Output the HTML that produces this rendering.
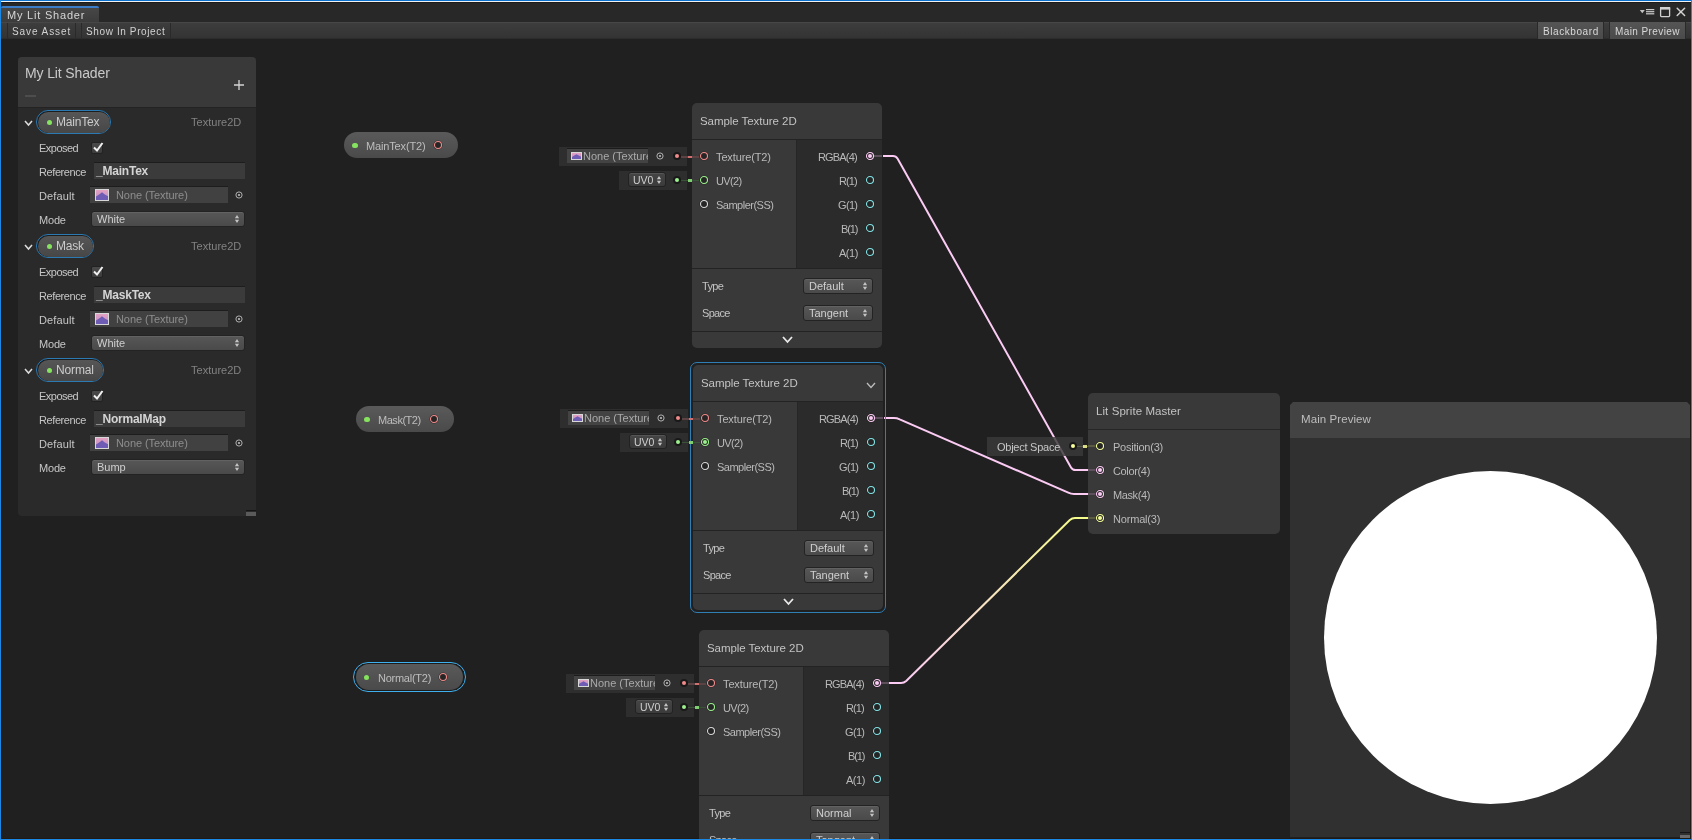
<!DOCTYPE html>
<html><head><meta charset="utf-8"><style>
html,body{margin:0;padding:0;width:1692px;height:840px;overflow:hidden;background:#202020;}
body{position:relative;font-family:"Liberation Sans", sans-serif;}
.t{position:absolute;line-height:0;white-space:pre;will-change:transform;}
.r{position:absolute;box-sizing:border-box;}
svg{position:absolute;left:0;top:0;}
</style></head><body>
<div class="r" style="left:1px;top:838px;width:1690px;height:1px;background:#1e1a16"></div>
<div class="r" style="left:1px;top:2px;width:1px;height:837px;background:#1e1a16"></div>
<div class="r" style="left:1690px;top:22px;width:1px;height:817px;background:#1e1a16"></div>
<div class="r" style="left:0px;top:2px;width:1692px;height:20px;background:#282828;border-top:1px solid #1b1b1b"></div>
<div class="r" style="left:1px;top:6px;width:98px;height:16px;background:linear-gradient(#474747,#3c3c3c);border-top:2px solid #3b7cc9;border-radius:2px 2px 0 0"></div>
<div class="t" style="top:15.00px;font-size:11px;color:#d6d6d6;letter-spacing:0.794px;left:6.50px;">My Lit Shader</div>
<div class="r" style="left:1px;top:22px;width:1690px;height:17px;background:linear-gradient(#3d3d3d,#333333);border-top:1px solid #474747;border-bottom:1px solid #2c2c2c"></div>
<div class="r" style="left:7px;top:23px;width:1px;height:15px;background:#2a2a2a"></div>
<div class="r" style="left:75px;top:23px;width:1px;height:15px;background:#2a2a2a"></div>
<div class="r" style="left:81px;top:23px;width:1px;height:15px;background:#2a2a2a"></div>
<div class="r" style="left:170px;top:23px;width:1px;height:15px;background:#2a2a2a"></div>
<div class="t" style="top:31.80px;font-size:10px;color:#d2d2d2;letter-spacing:0.908px;left:12.40px;">Save Asset</div>
<div class="t" style="top:31.70px;font-size:10px;color:#d2d2d2;letter-spacing:0.618px;left:85.60px;">Show In Project</div>
<div class="r" style="left:1537px;top:22px;width:67px;height:17px;background:linear-gradient(#555,#4a4a4a);border-left:1px solid #2a2a2a;border-right:1px solid #2a2a2a"></div>
<div class="r" style="left:1609px;top:22px;width:77px;height:17px;background:linear-gradient(#555,#4a4a4a);border-left:1px solid #2a2a2a;border-right:1px solid #2a2a2a"></div>
<div class="t" style="top:31.50px;font-size:10px;color:#d8d8d8;letter-spacing:0.574px;left:1542.60px;">Blackboard</div>
<div class="t" style="top:31.50px;font-size:10px;color:#d8d8d8;letter-spacing:0.406px;left:1614.50px;">Main Preview</div>
<svg style="left:1638px;top:0px" width="54" height="22"><path d="M1.8 10 L6.8 10 L4.3 13.2 Z" fill="#c4c4c4"/><rect x="8" y="9" width="8.3" height="1.2" fill="#cdcdcd"/><rect x="8" y="11.1" width="8.3" height="1.2" fill="#cdcdcd"/><rect x="8" y="13.2" width="8.3" height="1.2" fill="#cdcdcd"/><rect x="22.6" y="7.6" width="9" height="9" rx="0.8" fill="none" stroke="#d0d0d0" stroke-width="1.3"/><rect x="22" y="7" width="10.2" height="2.6" fill="#d0d0d0"/><path d="M39.2 8.3 L46.6 15.5 M46.6 8.3 L39.2 15.5" stroke="#d2d2d2" stroke-width="1.5" stroke-linecap="round"/></svg>
<div class="r" style="left:18px;top:57px;width:238px;height:459px;background:#2a2a2a;border-radius:4px;overflow:hidden"></div>
<div class="r" style="left:18px;top:57px;width:238px;height:51px;background:#393939;border-radius:4px 4px 0 0;border-bottom:1px solid #232323"></div>
<div class="t" style="top:73.00px;font-size:14px;color:#c9c9c9;letter-spacing:-0.131px;left:25.20px;">My Lit Shader</div>
<svg style="left:233px;top:79px" width="12" height="12"><path d="M6 1 V11 M1 6 H11" stroke="#d4d4d4" stroke-width="1.3"/></svg>
<div class="r" style="left:25px;top:95px;width:11px;height:2px;background:#4d4d4d"></div>
<div class="r" style="left:246px;top:510px;width:10px;height:1px;background:#151515"></div>
<div class="r" style="left:246px;top:512px;width:10px;height:4px;background:#5a5a5a"></div>
<svg style="left:22.5px;top:118.5px" width="11" height="8"><path d="M2 2 L5.5 6 L9 2" fill="none" stroke="#dcdcdc" stroke-width="1.5"/></svg>
<div class="r" style="left:36px;top:110px;width:75px;height:24px;border-radius:12px;border:1px solid #2b7ab4;background:#1d1d1d"></div>
<div class="r" style="left:37.5px;top:111.5px;width:72px;height:21px;border-radius:11px;background:linear-gradient(#565656,#474747)"></div>
<div class="r" style="left:46.5px;top:119.5px;width:5px;height:5px;border-radius:50%;background:#86e35f"></div>
<div class="t" style="top:122.00px;font-size:12px;color:#cbcbcb;letter-spacing:-0.181px;left:56.40px;">MainTex</div>
<div class="t" style="top:122.00px;font-size:11px;color:#828282;letter-spacing:0.020px;right:1450.38px;">Texture2D</div>
<div class="t" style="top:148.00px;font-size:11px;color:#c6c6c6;letter-spacing:-0.519px;left:38.60px;">Exposed</div>
<div class="r" style="left:91px;top:142px;width:12px;height:12px;border-radius:2px;background:linear-gradient(#4a4a4a,#3c3c3c);border:1px solid #222"></div>
<svg style="left:91px;top:140px" width="14" height="14"><path d="M3 7.5 L6 10.5 L11.5 3" fill="none" stroke="#f0f0f0" stroke-width="2"/></svg>
<div class="t" style="top:172.00px;font-size:11px;color:#c6c6c6;letter-spacing:-0.408px;left:38.60px;">Reference</div>
<div class="r" style="left:94px;top:162px;width:151px;height:17px;background:#3b3b3b;border-top:1px solid #1d1d1d"></div>
<div class="t" style="top:171.30px;font-size:12px;color:#d4d4d4;font-weight:bold;letter-spacing:-0.214px;left:96.20px;">_MainTex</div>
<div class="t" style="top:196.00px;font-size:11px;color:#c6c6c6;letter-spacing:0.107px;left:38.60px;">Default</div>
<div class="r" style="left:90px;top:186px;width:138px;height:17px;background:#414141;border-top:1px solid #1d1d1d"></div>
<svg style="left:95px;top:189px" width="14" height="12"><defs><linearGradient id="ti95_189" x1="0" y1="0" x2="0" y2="1"><stop offset="0" stop-color="#e7a2c2"/><stop offset="1" stop-color="#b58dc8"/></linearGradient></defs><rect x="0.5" y="0.5" width="13" height="11" fill="url(#ti95_189)" stroke="#d8d8d8" stroke-width="1"/><path d="M1 11 L1 7.4399999999999995 L4.2 5.4 L7.0 3.3600000000000003 L9.799999999999999 5.4 L13 7.199999999999999 L13 11 Z" fill="#6f5cb4"/></svg>
<div class="t" style="top:195.00px;font-size:11px;color:#8e8e8e;letter-spacing:-0.074px;left:116.40px;">None (Texture)</div>
<svg style="left:234px;top:190px" width="10" height="10"><circle cx="5" cy="5" r="3.1" fill="none" stroke="#bdbdbd" stroke-width="0.9"/><circle cx="5" cy="5" r="1.1" fill="#bdbdbd"/></svg>
<div class="t" style="top:220.00px;font-size:11px;color:#c6c6c6;letter-spacing:-0.177px;left:38.60px;">Mode</div>
<div class="r" style="left:91px;top:211px;width:154px;height:16px;border-radius:3px;background:linear-gradient(#575757,#4a4a4a);border:1px solid #232323;box-shadow:inset 0 1px 0 #626262"></div>
<div class="t" style="top:218.50px;font-size:11px;color:#cfcfcf;left:97.00px;">White</div>
<svg style="left:234px;top:214.0px" width="6" height="10"><path d="M0.9 4.2 L3 1 L5.1 4.2 Z M0.9 5.8 L3 9 L5.1 5.8 Z" fill="#c4c4c4"/></svg>
<svg style="left:22.5px;top:242.5px" width="11" height="8"><path d="M2 2 L5.5 6 L9 2" fill="none" stroke="#dcdcdc" stroke-width="1.5"/></svg>
<div class="r" style="left:36px;top:234px;width:58px;height:24px;border-radius:12px;border:1px solid #2b7ab4;background:#1d1d1d"></div>
<div class="r" style="left:37.5px;top:235.5px;width:55px;height:21px;border-radius:11px;background:linear-gradient(#565656,#474747)"></div>
<div class="r" style="left:46.5px;top:243.5px;width:5px;height:5px;border-radius:50%;background:#86e35f"></div>
<div class="t" style="top:246.00px;font-size:12px;color:#cbcbcb;letter-spacing:-0.224px;left:56.40px;">Mask</div>
<div class="t" style="top:246.00px;font-size:11px;color:#828282;letter-spacing:0.020px;right:1450.38px;">Texture2D</div>
<div class="t" style="top:272.00px;font-size:11px;color:#c6c6c6;letter-spacing:-0.519px;left:38.60px;">Exposed</div>
<div class="r" style="left:91px;top:266px;width:12px;height:12px;border-radius:2px;background:linear-gradient(#4a4a4a,#3c3c3c);border:1px solid #222"></div>
<svg style="left:91px;top:264px" width="14" height="14"><path d="M3 7.5 L6 10.5 L11.5 3" fill="none" stroke="#f0f0f0" stroke-width="2"/></svg>
<div class="t" style="top:296.00px;font-size:11px;color:#c6c6c6;letter-spacing:-0.408px;left:38.60px;">Reference</div>
<div class="r" style="left:94px;top:286px;width:151px;height:17px;background:#3b3b3b;border-top:1px solid #1d1d1d"></div>
<div class="t" style="top:295.30px;font-size:12px;color:#d4d4d4;font-weight:bold;letter-spacing:-0.212px;left:96.20px;">_MaskTex</div>
<div class="t" style="top:320.00px;font-size:11px;color:#c6c6c6;letter-spacing:0.107px;left:38.60px;">Default</div>
<div class="r" style="left:90px;top:310px;width:138px;height:17px;background:#414141;border-top:1px solid #1d1d1d"></div>
<svg style="left:95px;top:313px" width="14" height="12"><defs><linearGradient id="ti95_313" x1="0" y1="0" x2="0" y2="1"><stop offset="0" stop-color="#e7a2c2"/><stop offset="1" stop-color="#b58dc8"/></linearGradient></defs><rect x="0.5" y="0.5" width="13" height="11" fill="url(#ti95_313)" stroke="#d8d8d8" stroke-width="1"/><path d="M1 11 L1 7.4399999999999995 L4.2 5.4 L7.0 3.3600000000000003 L9.799999999999999 5.4 L13 7.199999999999999 L13 11 Z" fill="#6f5cb4"/></svg>
<div class="t" style="top:319.00px;font-size:11px;color:#8e8e8e;letter-spacing:-0.074px;left:116.40px;">None (Texture)</div>
<svg style="left:234px;top:314px" width="10" height="10"><circle cx="5" cy="5" r="3.1" fill="none" stroke="#bdbdbd" stroke-width="0.9"/><circle cx="5" cy="5" r="1.1" fill="#bdbdbd"/></svg>
<div class="t" style="top:344.00px;font-size:11px;color:#c6c6c6;letter-spacing:-0.177px;left:38.60px;">Mode</div>
<div class="r" style="left:91px;top:335px;width:154px;height:16px;border-radius:3px;background:linear-gradient(#575757,#4a4a4a);border:1px solid #232323;box-shadow:inset 0 1px 0 #626262"></div>
<div class="t" style="top:342.50px;font-size:11px;color:#cfcfcf;left:97.00px;">White</div>
<svg style="left:234px;top:338.0px" width="6" height="10"><path d="M0.9 4.2 L3 1 L5.1 4.2 Z M0.9 5.8 L3 9 L5.1 5.8 Z" fill="#c4c4c4"/></svg>
<svg style="left:22.5px;top:366.5px" width="11" height="8"><path d="M2 2 L5.5 6 L9 2" fill="none" stroke="#dcdcdc" stroke-width="1.5"/></svg>
<div class="r" style="left:36px;top:358px;width:68px;height:24px;border-radius:12px;border:1px solid #2b7ab4;background:#1d1d1d"></div>
<div class="r" style="left:37.5px;top:359.5px;width:65px;height:21px;border-radius:11px;background:linear-gradient(#565656,#474747)"></div>
<div class="r" style="left:46.5px;top:367.5px;width:5px;height:5px;border-radius:50%;background:#86e35f"></div>
<div class="t" style="top:370.00px;font-size:12px;color:#cbcbcb;letter-spacing:-0.134px;left:56.40px;">Normal</div>
<div class="t" style="top:370.00px;font-size:11px;color:#828282;letter-spacing:0.020px;right:1450.38px;">Texture2D</div>
<div class="t" style="top:396.00px;font-size:11px;color:#c6c6c6;letter-spacing:-0.519px;left:38.60px;">Exposed</div>
<div class="r" style="left:91px;top:390px;width:12px;height:12px;border-radius:2px;background:linear-gradient(#4a4a4a,#3c3c3c);border:1px solid #222"></div>
<svg style="left:91px;top:388px" width="14" height="14"><path d="M3 7.5 L6 10.5 L11.5 3" fill="none" stroke="#f0f0f0" stroke-width="2"/></svg>
<div class="t" style="top:420.00px;font-size:11px;color:#c6c6c6;letter-spacing:-0.408px;left:38.60px;">Reference</div>
<div class="r" style="left:94px;top:410px;width:151px;height:17px;background:#3b3b3b;border-top:1px solid #1d1d1d"></div>
<div class="t" style="top:419.30px;font-size:12px;color:#d4d4d4;font-weight:bold;letter-spacing:-0.226px;left:96.20px;">_NormalMap</div>
<div class="t" style="top:444.00px;font-size:11px;color:#c6c6c6;letter-spacing:0.107px;left:38.60px;">Default</div>
<div class="r" style="left:90px;top:434px;width:138px;height:17px;background:#414141;border-top:1px solid #1d1d1d"></div>
<svg style="left:95px;top:437px" width="14" height="12"><defs><linearGradient id="ti95_437" x1="0" y1="0" x2="0" y2="1"><stop offset="0" stop-color="#e7a2c2"/><stop offset="1" stop-color="#b58dc8"/></linearGradient></defs><rect x="0.5" y="0.5" width="13" height="11" fill="url(#ti95_437)" stroke="#d8d8d8" stroke-width="1"/><path d="M1 11 L1 7.4399999999999995 L4.2 5.4 L7.0 3.3600000000000003 L9.799999999999999 5.4 L13 7.199999999999999 L13 11 Z" fill="#6f5cb4"/></svg>
<div class="t" style="top:443.00px;font-size:11px;color:#8e8e8e;letter-spacing:-0.074px;left:116.40px;">None (Texture)</div>
<svg style="left:234px;top:438px" width="10" height="10"><circle cx="5" cy="5" r="3.1" fill="none" stroke="#bdbdbd" stroke-width="0.9"/><circle cx="5" cy="5" r="1.1" fill="#bdbdbd"/></svg>
<div class="t" style="top:468.00px;font-size:11px;color:#c6c6c6;letter-spacing:-0.177px;left:38.60px;">Mode</div>
<div class="r" style="left:91px;top:459px;width:154px;height:16px;border-radius:3px;background:linear-gradient(#575757,#4a4a4a);border:1px solid #232323;box-shadow:inset 0 1px 0 #626262"></div>
<div class="t" style="top:466.50px;font-size:11px;color:#cfcfcf;left:97.00px;">Bump</div>
<svg style="left:234px;top:462.0px" width="6" height="10"><path d="M0.9 4.2 L3 1 L5.1 4.2 Z M0.9 5.8 L3 9 L5.1 5.8 Z" fill="#c4c4c4"/></svg>
<svg width="1692" height="840" style="left:0;top:0">
<defs><linearGradient id="g3" gradientUnits="userSpaceOnUse" x1="904" y1="683" x2="1072" y2="518">
<stop offset="0" stop-color="#fbcbf4"/><stop offset="1" stop-color="#f4fa8c"/></linearGradient></defs>
<path d="M883 156 L893 156 Q896 156 897.5 158.6 L1071 467.4 Q1072.5 470 1075.5 470 L1088 470" fill="none" stroke="#fbcbf4" stroke-width="2"/>
<path d="M884 418 L894 418 Q897 418 899.7 419.3 L1068.3 492.7 Q1071 494 1074 494 L1088 494" fill="none" stroke="#fbcbf4" stroke-width="2"/>
<path d="M889 683 L901 683 Q904 683 906.2 681 L1069.8 520 Q1072 518 1075 518 L1088 518" fill="none" stroke="url(#g3)" stroke-width="2"/>
</svg>
<div class="r" style="left:692px;top:103px;width:190px;height:245px;background:#393939;border-radius:5px;overflow:hidden"></div>
<div class="r" style="left:692px;top:139px;width:190px;height:1px;background:#232323"></div>
<div class="r" style="left:797px;top:140px;width:85px;height:128px;background:#2b2b2b"></div>
<div class="r" style="left:796px;top:140px;width:1px;height:128px;background:#262626"></div>
<div class="r" style="left:692px;top:268px;width:190px;height:1px;background:#232323"></div>
<div class="r" style="left:692px;top:331px;width:190px;height:1px;background:#232323"></div>
<div class="t" style="top:120.60px;font-size:11.5px;color:#c3c3c3;letter-spacing:-0.056px;left:700.40px;">Sample Texture 2D</div>
<svg style="left:698px;top:150px" width="12" height="12"><circle cx="6" cy="6" r="4.6" fill="#1c1c1c" opacity="0.6"/><circle cx="6" cy="6" r="3.5" fill="#252525" stroke="#f28b8b" stroke-width="1.1"/></svg>
<div class="t" style="top:157.00px;font-size:11px;color:#b9b9b9;letter-spacing:-0.125px;left:716.30px;">Texture(T2)</div>
<svg style="left:698px;top:174px" width="12" height="12"><circle cx="6" cy="6" r="4.6" fill="#1c1c1c" opacity="0.6"/><circle cx="6" cy="6" r="3.5" fill="#252525" stroke="#9cf08e" stroke-width="1.1"/></svg>
<div class="t" style="top:181.00px;font-size:11px;color:#b9b9b9;letter-spacing:-0.634px;left:716.30px;">UV(2)</div>
<svg style="left:698px;top:198px" width="12" height="12"><circle cx="6" cy="6" r="4.6" fill="#1c1c1c" opacity="0.6"/><circle cx="6" cy="6" r="3.5" fill="#252525" stroke="#d8d8d8" stroke-width="1.1"/></svg>
<div class="t" style="top:205.00px;font-size:11px;color:#b9b9b9;letter-spacing:-0.507px;left:716.30px;">Sampler(SS)</div>
<svg style="left:864px;top:150px" width="12" height="12"><circle cx="6" cy="6" r="4.6" fill="#1c1c1c" opacity="0.6"/><circle cx="6" cy="6" r="3.5" fill="#252525" stroke="#fbcbf4" stroke-width="1.1"/><circle cx="6" cy="6" r="2" fill="#fbcbf4"/></svg>
<div class="t" style="top:157.00px;font-size:11px;color:#b9b9b9;letter-spacing:-0.837px;right:834.84px;">RGBA(4)</div>
<svg style="left:864px;top:174px" width="12" height="12"><circle cx="6" cy="6" r="4.6" fill="#1c1c1c" opacity="0.6"/><circle cx="6" cy="6" r="3.5" fill="#252525" stroke="#84e4e7" stroke-width="1.1"/></svg>
<div class="t" style="top:181.00px;font-size:11px;color:#b9b9b9;letter-spacing:-0.930px;right:834.93px;">R(1)</div>
<svg style="left:864px;top:198px" width="12" height="12"><circle cx="6" cy="6" r="4.6" fill="#1c1c1c" opacity="0.6"/><circle cx="6" cy="6" r="3.5" fill="#252525" stroke="#84e4e7" stroke-width="1.1"/></svg>
<div class="t" style="top:205.00px;font-size:11px;color:#b9b9b9;letter-spacing:-0.667px;right:834.67px;">G(1)</div>
<svg style="left:864px;top:222px" width="12" height="12"><circle cx="6" cy="6" r="4.6" fill="#1c1c1c" opacity="0.6"/><circle cx="6" cy="6" r="3.5" fill="#252525" stroke="#84e4e7" stroke-width="1.1"/></svg>
<div class="t" style="top:229.00px;font-size:11px;color:#b9b9b9;letter-spacing:-1.160px;right:835.16px;">B(1)</div>
<svg style="left:864px;top:246px" width="12" height="12"><circle cx="6" cy="6" r="4.6" fill="#1c1c1c" opacity="0.6"/><circle cx="6" cy="6" r="3.5" fill="#252525" stroke="#84e4e7" stroke-width="1.1"/></svg>
<div class="t" style="top:253.00px;font-size:11px;color:#b9b9b9;letter-spacing:-0.494px;right:834.49px;">A(1)</div>
<div class="r" style="left:874px;top:155px;width:8px;height:2px;background:#5e4f5c"></div>
<div class="t" style="top:286.20px;font-size:11px;color:#c3c3c3;letter-spacing:-0.620px;left:702.30px;">Type</div>
<div class="r" style="left:803px;top:278px;width:70px;height:16px;border-radius:3px;background:linear-gradient(#575757,#4a4a4a);border:1px solid #232323;box-shadow:inset 0 1px 0 #626262"></div>
<div class="t" style="top:285.50px;font-size:11px;color:#cfcfcf;left:809.00px;">Default</div>
<svg style="left:862px;top:281.0px" width="6" height="10"><path d="M0.9 4.2 L3 1 L5.1 4.2 Z M0.9 5.8 L3 9 L5.1 5.8 Z" fill="#c4c4c4"/></svg>
<div class="t" style="top:313.20px;font-size:11px;color:#c3c3c3;letter-spacing:-0.676px;left:702.30px;">Space</div>
<div class="r" style="left:803px;top:305px;width:70px;height:16px;border-radius:3px;background:linear-gradient(#575757,#4a4a4a);border:1px solid #232323;box-shadow:inset 0 1px 0 #626262"></div>
<div class="t" style="top:312.50px;font-size:11px;color:#cfcfcf;left:809.00px;">Tangent</div>
<svg style="left:862px;top:308.0px" width="6" height="10"><path d="M0.9 4.2 L3 1 L5.1 4.2 Z M0.9 5.8 L3 9 L5.1 5.8 Z" fill="#c4c4c4"/></svg>
<svg style="left:780.5px;top:335.0px" width="13" height="9"><path d="M2 2 L6.5 7 L11 2" fill="none" stroke="#e8e8e8" stroke-width="1.8"/></svg>
<div class="r" style="left:559px;top:147px;width:128px;height:19px;background:#2e2e2e"></div>
<div class="r" style="left:567px;top:148px;width:81px;height:15px;background:#434343;border-top:1px solid #1c1c1c"></div>
<svg style="left:571px;top:152px" width="11" height="8"><defs><linearGradient id="ti571_152" x1="0" y1="0" x2="0" y2="1"><stop offset="0" stop-color="#e7a2c2"/><stop offset="1" stop-color="#b58dc8"/></linearGradient></defs><rect x="0.5" y="0.5" width="10" height="7" fill="url(#ti571_152)" stroke="#d8d8d8" stroke-width="1"/><path d="M1 7 L1 4.96 L3.3 3.6 L5.5 2.24 L7.699999999999999 3.6 L10 4.8 L10 7 Z" fill="#6f5cb4"/></svg>
<div class="t" style="top:156.00px;font-size:11px;color:#a9a9a9;left:583.40px;width:65px;overflow:hidden;line-height:14px;height:14px;margin-top:-7px;">None (Texture</div>
<svg style="left:655.4px;top:150.6px" width="10" height="10"><circle cx="5" cy="5" r="3.1" fill="none" stroke="#bdbdbd" stroke-width="0.9"/><circle cx="5" cy="5" r="1.1" fill="#bdbdbd"/></svg>
<div class="r" style="left:673.0px;top:152.0px;width:8px;height:8px;border-radius:50%;background:#191919"></div>
<div class="r" style="left:675.0px;top:154.0px;width:4px;height:4px;border-radius:50%;background:#f28b8b"></div>
<div class="r" style="left:681px;top:156px;width:18px;height:1.6px;background:#5c4242"></div>
<div class="r" style="left:688px;top:155.5px;width:4px;height:2.5px;background:#d26f6f"></div>
<div class="r" style="left:619px;top:171px;width:68px;height:19px;background:#2e2e2e"></div>
<div class="r" style="left:628px;top:172px;width:38px;height:15px;border-radius:3px;background:linear-gradient(#454545,#3b3b3b);border:1px solid #222;box-shadow:inset 0 1px 0 #555"></div>
<div class="t" style="top:179.80px;font-size:10.5px;color:#cfcfcf;left:632.50px;">UV0</div>
<svg style="left:655.5px;top:175px" width="6" height="10"><path d="M0.9 4.2 L3 1 L5.1 4.2 Z M0.9 5.8 L3 9 L5.1 5.8 Z" fill="#c4c4c4"/></svg>
<div class="r" style="left:673.0px;top:176.0px;width:8px;height:8px;border-radius:50%;background:#191919"></div>
<div class="r" style="left:675.0px;top:178.0px;width:4px;height:4px;border-radius:50%;background:#9cf08e"></div>
<div class="r" style="left:681px;top:179.5px;width:18px;height:1.6px;background:#3a5237"></div>
<div class="r" style="left:688px;top:179px;width:4px;height:2.5px;background:#7fcf72"></div>
<div class="r" style="left:690px;top:362px;width:196px;height:251px;border:1px solid #2f7fb5;border-radius:7px"></div>
<div class="r" style="left:693px;top:365px;width:190px;height:245px;background:#393939;border-radius:5px;overflow:hidden"></div>
<div class="r" style="left:693px;top:401px;width:190px;height:1px;background:#232323"></div>
<div class="r" style="left:798px;top:402px;width:85px;height:128px;background:#2b2b2b"></div>
<div class="r" style="left:797px;top:402px;width:1px;height:128px;background:#262626"></div>
<div class="r" style="left:693px;top:530px;width:190px;height:1px;background:#232323"></div>
<div class="r" style="left:693px;top:593px;width:190px;height:1px;background:#232323"></div>
<div class="t" style="top:382.60px;font-size:11.5px;color:#c3c3c3;letter-spacing:-0.056px;left:701.40px;">Sample Texture 2D</div>
<svg style="left:865.0px;top:380.75px" width="12" height="8.5"><path d="M2 2 L6.0 6.5 L10 2" fill="none" stroke="#bdbdbd" stroke-width="1.3"/></svg>
<svg style="left:699px;top:412px" width="12" height="12"><circle cx="6" cy="6" r="4.6" fill="#1c1c1c" opacity="0.6"/><circle cx="6" cy="6" r="3.5" fill="#252525" stroke="#f28b8b" stroke-width="1.1"/></svg>
<div class="t" style="top:419.00px;font-size:11px;color:#b9b9b9;letter-spacing:-0.125px;left:717.30px;">Texture(T2)</div>
<svg style="left:699px;top:436px" width="12" height="12"><circle cx="6" cy="6" r="4.6" fill="#1c1c1c" opacity="0.6"/><circle cx="6" cy="6" r="3.5" fill="#252525" stroke="#9cf08e" stroke-width="1.1"/><circle cx="6" cy="6" r="2" fill="#9cf08e"/></svg>
<div class="t" style="top:443.00px;font-size:11px;color:#b9b9b9;letter-spacing:-0.634px;left:717.30px;">UV(2)</div>
<svg style="left:699px;top:460px" width="12" height="12"><circle cx="6" cy="6" r="4.6" fill="#1c1c1c" opacity="0.6"/><circle cx="6" cy="6" r="3.5" fill="#252525" stroke="#d8d8d8" stroke-width="1.1"/></svg>
<div class="t" style="top:467.00px;font-size:11px;color:#b9b9b9;letter-spacing:-0.507px;left:717.30px;">Sampler(SS)</div>
<svg style="left:865px;top:412px" width="12" height="12"><circle cx="6" cy="6" r="4.6" fill="#1c1c1c" opacity="0.6"/><circle cx="6" cy="6" r="3.5" fill="#252525" stroke="#fbcbf4" stroke-width="1.1"/><circle cx="6" cy="6" r="2" fill="#fbcbf4"/></svg>
<div class="t" style="top:419.00px;font-size:11px;color:#b9b9b9;letter-spacing:-0.837px;right:833.84px;">RGBA(4)</div>
<svg style="left:865px;top:436px" width="12" height="12"><circle cx="6" cy="6" r="4.6" fill="#1c1c1c" opacity="0.6"/><circle cx="6" cy="6" r="3.5" fill="#252525" stroke="#84e4e7" stroke-width="1.1"/></svg>
<div class="t" style="top:443.00px;font-size:11px;color:#b9b9b9;letter-spacing:-0.930px;right:833.93px;">R(1)</div>
<svg style="left:865px;top:460px" width="12" height="12"><circle cx="6" cy="6" r="4.6" fill="#1c1c1c" opacity="0.6"/><circle cx="6" cy="6" r="3.5" fill="#252525" stroke="#84e4e7" stroke-width="1.1"/></svg>
<div class="t" style="top:467.00px;font-size:11px;color:#b9b9b9;letter-spacing:-0.667px;right:833.67px;">G(1)</div>
<svg style="left:865px;top:484px" width="12" height="12"><circle cx="6" cy="6" r="4.6" fill="#1c1c1c" opacity="0.6"/><circle cx="6" cy="6" r="3.5" fill="#252525" stroke="#84e4e7" stroke-width="1.1"/></svg>
<div class="t" style="top:491.00px;font-size:11px;color:#b9b9b9;letter-spacing:-1.160px;right:834.16px;">B(1)</div>
<svg style="left:865px;top:508px" width="12" height="12"><circle cx="6" cy="6" r="4.6" fill="#1c1c1c" opacity="0.6"/><circle cx="6" cy="6" r="3.5" fill="#252525" stroke="#84e4e7" stroke-width="1.1"/></svg>
<div class="t" style="top:515.00px;font-size:11px;color:#b9b9b9;letter-spacing:-0.494px;right:833.49px;">A(1)</div>
<div class="r" style="left:875px;top:417px;width:8px;height:2px;background:#5e4f5c"></div>
<div class="t" style="top:548.20px;font-size:11px;color:#c3c3c3;letter-spacing:-0.620px;left:703.30px;">Type</div>
<div class="r" style="left:804px;top:540px;width:70px;height:16px;border-radius:3px;background:linear-gradient(#575757,#4a4a4a);border:1px solid #232323;box-shadow:inset 0 1px 0 #626262"></div>
<div class="t" style="top:547.50px;font-size:11px;color:#cfcfcf;left:810.00px;">Default</div>
<svg style="left:863px;top:543.0px" width="6" height="10"><path d="M0.9 4.2 L3 1 L5.1 4.2 Z M0.9 5.8 L3 9 L5.1 5.8 Z" fill="#c4c4c4"/></svg>
<div class="t" style="top:575.20px;font-size:11px;color:#c3c3c3;letter-spacing:-0.676px;left:703.30px;">Space</div>
<div class="r" style="left:804px;top:567px;width:70px;height:16px;border-radius:3px;background:linear-gradient(#575757,#4a4a4a);border:1px solid #232323;box-shadow:inset 0 1px 0 #626262"></div>
<div class="t" style="top:574.50px;font-size:11px;color:#cfcfcf;left:810.00px;">Tangent</div>
<svg style="left:863px;top:570.0px" width="6" height="10"><path d="M0.9 4.2 L3 1 L5.1 4.2 Z M0.9 5.8 L3 9 L5.1 5.8 Z" fill="#c4c4c4"/></svg>
<svg style="left:781.5px;top:597.0px" width="13" height="9"><path d="M2 2 L6.5 7 L11 2" fill="none" stroke="#e8e8e8" stroke-width="1.8"/></svg>
<div class="r" style="left:560px;top:409px;width:128px;height:19px;background:#2e2e2e"></div>
<div class="r" style="left:568px;top:410px;width:81px;height:15px;background:#434343;border-top:1px solid #1c1c1c"></div>
<svg style="left:572px;top:414px" width="11" height="8"><defs><linearGradient id="ti572_414" x1="0" y1="0" x2="0" y2="1"><stop offset="0" stop-color="#e7a2c2"/><stop offset="1" stop-color="#b58dc8"/></linearGradient></defs><rect x="0.5" y="0.5" width="10" height="7" fill="url(#ti572_414)" stroke="#d8d8d8" stroke-width="1"/><path d="M1 7 L1 4.96 L3.3 3.6 L5.5 2.24 L7.699999999999999 3.6 L10 4.8 L10 7 Z" fill="#6f5cb4"/></svg>
<div class="t" style="top:418.00px;font-size:11px;color:#a9a9a9;left:584.40px;width:65px;overflow:hidden;line-height:14px;height:14px;margin-top:-7px;">None (Texture</div>
<svg style="left:656.4px;top:412.6px" width="10" height="10"><circle cx="5" cy="5" r="3.1" fill="none" stroke="#bdbdbd" stroke-width="0.9"/><circle cx="5" cy="5" r="1.1" fill="#bdbdbd"/></svg>
<div class="r" style="left:674.0px;top:414.0px;width:8px;height:8px;border-radius:50%;background:#191919"></div>
<div class="r" style="left:676.0px;top:416.0px;width:4px;height:4px;border-radius:50%;background:#f28b8b"></div>
<div class="r" style="left:682px;top:418px;width:18px;height:1.6px;background:#5c4242"></div>
<div class="r" style="left:689px;top:417.5px;width:4px;height:2.5px;background:#d26f6f"></div>
<div class="r" style="left:620px;top:433px;width:68px;height:19px;background:#2e2e2e"></div>
<div class="r" style="left:629px;top:434px;width:38px;height:15px;border-radius:3px;background:linear-gradient(#454545,#3b3b3b);border:1px solid #222;box-shadow:inset 0 1px 0 #555"></div>
<div class="t" style="top:441.80px;font-size:10.5px;color:#cfcfcf;left:633.50px;">UV0</div>
<svg style="left:656.5px;top:437px" width="6" height="10"><path d="M0.9 4.2 L3 1 L5.1 4.2 Z M0.9 5.8 L3 9 L5.1 5.8 Z" fill="#c4c4c4"/></svg>
<div class="r" style="left:674.0px;top:438.0px;width:8px;height:8px;border-radius:50%;background:#191919"></div>
<div class="r" style="left:676.0px;top:440.0px;width:4px;height:4px;border-radius:50%;background:#9cf08e"></div>
<div class="r" style="left:682px;top:441.5px;width:18px;height:1.6px;background:#3a5237"></div>
<div class="r" style="left:689px;top:441px;width:4px;height:2.5px;background:#7fcf72"></div>
<div class="r" style="left:699px;top:630px;width:190px;height:245px;background:#393939;border-radius:5px;overflow:hidden"></div>
<div class="r" style="left:699px;top:666px;width:190px;height:1px;background:#232323"></div>
<div class="r" style="left:804px;top:667px;width:85px;height:128px;background:#2b2b2b"></div>
<div class="r" style="left:803px;top:667px;width:1px;height:128px;background:#262626"></div>
<div class="r" style="left:699px;top:795px;width:190px;height:1px;background:#232323"></div>
<div class="r" style="left:699px;top:858px;width:190px;height:1px;background:#232323"></div>
<div class="t" style="top:647.60px;font-size:11.5px;color:#c3c3c3;letter-spacing:-0.056px;left:707.40px;">Sample Texture 2D</div>
<svg style="left:705px;top:677px" width="12" height="12"><circle cx="6" cy="6" r="4.6" fill="#1c1c1c" opacity="0.6"/><circle cx="6" cy="6" r="3.5" fill="#252525" stroke="#f28b8b" stroke-width="1.1"/></svg>
<div class="t" style="top:684.00px;font-size:11px;color:#b9b9b9;letter-spacing:-0.125px;left:723.30px;">Texture(T2)</div>
<svg style="left:705px;top:701px" width="12" height="12"><circle cx="6" cy="6" r="4.6" fill="#1c1c1c" opacity="0.6"/><circle cx="6" cy="6" r="3.5" fill="#252525" stroke="#9cf08e" stroke-width="1.1"/></svg>
<div class="t" style="top:708.00px;font-size:11px;color:#b9b9b9;letter-spacing:-0.634px;left:723.30px;">UV(2)</div>
<svg style="left:705px;top:725px" width="12" height="12"><circle cx="6" cy="6" r="4.6" fill="#1c1c1c" opacity="0.6"/><circle cx="6" cy="6" r="3.5" fill="#252525" stroke="#d8d8d8" stroke-width="1.1"/></svg>
<div class="t" style="top:732.00px;font-size:11px;color:#b9b9b9;letter-spacing:-0.507px;left:723.30px;">Sampler(SS)</div>
<svg style="left:871px;top:677px" width="12" height="12"><circle cx="6" cy="6" r="4.6" fill="#1c1c1c" opacity="0.6"/><circle cx="6" cy="6" r="3.5" fill="#252525" stroke="#fbcbf4" stroke-width="1.1"/><circle cx="6" cy="6" r="2" fill="#fbcbf4"/></svg>
<div class="t" style="top:684.00px;font-size:11px;color:#b9b9b9;letter-spacing:-0.837px;right:827.84px;">RGBA(4)</div>
<svg style="left:871px;top:701px" width="12" height="12"><circle cx="6" cy="6" r="4.6" fill="#1c1c1c" opacity="0.6"/><circle cx="6" cy="6" r="3.5" fill="#252525" stroke="#84e4e7" stroke-width="1.1"/></svg>
<div class="t" style="top:708.00px;font-size:11px;color:#b9b9b9;letter-spacing:-0.930px;right:827.93px;">R(1)</div>
<svg style="left:871px;top:725px" width="12" height="12"><circle cx="6" cy="6" r="4.6" fill="#1c1c1c" opacity="0.6"/><circle cx="6" cy="6" r="3.5" fill="#252525" stroke="#84e4e7" stroke-width="1.1"/></svg>
<div class="t" style="top:732.00px;font-size:11px;color:#b9b9b9;letter-spacing:-0.667px;right:827.67px;">G(1)</div>
<svg style="left:871px;top:749px" width="12" height="12"><circle cx="6" cy="6" r="4.6" fill="#1c1c1c" opacity="0.6"/><circle cx="6" cy="6" r="3.5" fill="#252525" stroke="#84e4e7" stroke-width="1.1"/></svg>
<div class="t" style="top:756.00px;font-size:11px;color:#b9b9b9;letter-spacing:-1.160px;right:828.16px;">B(1)</div>
<svg style="left:871px;top:773px" width="12" height="12"><circle cx="6" cy="6" r="4.6" fill="#1c1c1c" opacity="0.6"/><circle cx="6" cy="6" r="3.5" fill="#252525" stroke="#84e4e7" stroke-width="1.1"/></svg>
<div class="t" style="top:780.00px;font-size:11px;color:#b9b9b9;letter-spacing:-0.494px;right:827.49px;">A(1)</div>
<div class="r" style="left:881px;top:682px;width:8px;height:2px;background:#5e4f5c"></div>
<div class="t" style="top:813.20px;font-size:11px;color:#c3c3c3;letter-spacing:-0.620px;left:709.30px;">Type</div>
<div class="r" style="left:810px;top:805px;width:70px;height:16px;border-radius:3px;background:linear-gradient(#575757,#4a4a4a);border:1px solid #232323;box-shadow:inset 0 1px 0 #626262"></div>
<div class="t" style="top:812.50px;font-size:11px;color:#cfcfcf;left:816.00px;">Normal</div>
<svg style="left:869px;top:808.0px" width="6" height="10"><path d="M0.9 4.2 L3 1 L5.1 4.2 Z M0.9 5.8 L3 9 L5.1 5.8 Z" fill="#c4c4c4"/></svg>
<div class="t" style="top:840.20px;font-size:11px;color:#c3c3c3;letter-spacing:-0.676px;left:709.30px;">Space</div>
<div class="r" style="left:810px;top:832px;width:70px;height:16px;border-radius:3px;background:linear-gradient(#575757,#4a4a4a);border:1px solid #232323;box-shadow:inset 0 1px 0 #626262"></div>
<div class="t" style="top:839.50px;font-size:11px;color:#cfcfcf;left:816.00px;">Tangent</div>
<svg style="left:869px;top:835.0px" width="6" height="10"><path d="M0.9 4.2 L3 1 L5.1 4.2 Z M0.9 5.8 L3 9 L5.1 5.8 Z" fill="#c4c4c4"/></svg>
<svg style="left:787.5px;top:862.0px" width="13" height="9"><path d="M2 2 L6.5 7 L11 2" fill="none" stroke="#e8e8e8" stroke-width="1.8"/></svg>
<div class="r" style="left:566px;top:674px;width:128px;height:19px;background:#2e2e2e"></div>
<div class="r" style="left:574px;top:675px;width:81px;height:15px;background:#434343;border-top:1px solid #1c1c1c"></div>
<svg style="left:578px;top:679px" width="11" height="8"><defs><linearGradient id="ti578_679" x1="0" y1="0" x2="0" y2="1"><stop offset="0" stop-color="#e7a2c2"/><stop offset="1" stop-color="#b58dc8"/></linearGradient></defs><rect x="0.5" y="0.5" width="10" height="7" fill="url(#ti578_679)" stroke="#d8d8d8" stroke-width="1"/><path d="M1 7 L1 4.96 L3.3 3.6 L5.5 2.24 L7.699999999999999 3.6 L10 4.8 L10 7 Z" fill="#6f5cb4"/></svg>
<div class="t" style="top:683.00px;font-size:11px;color:#a9a9a9;left:590.40px;width:65px;overflow:hidden;line-height:14px;height:14px;margin-top:-7px;">None (Texture</div>
<svg style="left:662.4px;top:677.6px" width="10" height="10"><circle cx="5" cy="5" r="3.1" fill="none" stroke="#bdbdbd" stroke-width="0.9"/><circle cx="5" cy="5" r="1.1" fill="#bdbdbd"/></svg>
<div class="r" style="left:680.0px;top:679.0px;width:8px;height:8px;border-radius:50%;background:#191919"></div>
<div class="r" style="left:682.0px;top:681.0px;width:4px;height:4px;border-radius:50%;background:#f28b8b"></div>
<div class="r" style="left:688px;top:683px;width:18px;height:1.6px;background:#5c4242"></div>
<div class="r" style="left:695px;top:682.5px;width:4px;height:2.5px;background:#d26f6f"></div>
<div class="r" style="left:626px;top:698px;width:68px;height:19px;background:#2e2e2e"></div>
<div class="r" style="left:635px;top:699px;width:38px;height:15px;border-radius:3px;background:linear-gradient(#454545,#3b3b3b);border:1px solid #222;box-shadow:inset 0 1px 0 #555"></div>
<div class="t" style="top:706.80px;font-size:10.5px;color:#cfcfcf;left:639.50px;">UV0</div>
<svg style="left:662.5px;top:702px" width="6" height="10"><path d="M0.9 4.2 L3 1 L5.1 4.2 Z M0.9 5.8 L3 9 L5.1 5.8 Z" fill="#c4c4c4"/></svg>
<div class="r" style="left:680.0px;top:703.0px;width:8px;height:8px;border-radius:50%;background:#191919"></div>
<div class="r" style="left:682.0px;top:705.0px;width:4px;height:4px;border-radius:50%;background:#9cf08e"></div>
<div class="r" style="left:688px;top:706.5px;width:18px;height:1.6px;background:#3a5237"></div>
<div class="r" style="left:695px;top:706px;width:4px;height:2.5px;background:#7fcf72"></div>
<div class="r" style="left:344px;top:132px;width:114px;height:26px;border-radius:13px;background:linear-gradient(#5a5a5a,#4a4a4a)"></div>
<div class="r" style="left:352.25px;top:142.55px;width:5.5px;height:5.5px;border-radius:50%;background:#86e35f"></div>
<div class="t" style="top:145.60px;font-size:11px;color:#bdbdbd;letter-spacing:-0.152px;left:366.40px;">MainTex(T2)</div>
<svg style="left:432px;top:139px" width="12" height="12"><circle cx="6" cy="6" r="4.6" fill="#1c1c1c" opacity="0.6"/><circle cx="6" cy="6" r="3.5" fill="#252525" stroke="#f28b8b" stroke-width="1.1"/></svg>
<div class="r" style="left:356px;top:406px;width:98px;height:26px;border-radius:13px;background:linear-gradient(#5a5a5a,#4a4a4a)"></div>
<div class="r" style="left:364.25px;top:416.55px;width:5.5px;height:5.5px;border-radius:50%;background:#86e35f"></div>
<div class="t" style="top:419.60px;font-size:11px;color:#bdbdbd;letter-spacing:-0.465px;left:378.40px;">Mask(T2)</div>
<svg style="left:428px;top:413px" width="12" height="12"><circle cx="6" cy="6" r="4.6" fill="#1c1c1c" opacity="0.6"/><circle cx="6" cy="6" r="3.5" fill="#252525" stroke="#f28b8b" stroke-width="1.1"/></svg>
<div class="r" style="left:353.0px;top:662px;width:112.5px;height:30px;border-radius:15px;border:1.2px solid #3fb0ee;background:#1d1d1d"></div>
<div class="r" style="left:355.5px;top:664px;width:107.5px;height:26px;border-radius:13px;background:linear-gradient(#5a5a5a,#4a4a4a)"></div>
<div class="r" style="left:363.75px;top:674.55px;width:5.5px;height:5.5px;border-radius:50%;background:#86e35f"></div>
<div class="t" style="top:677.60px;font-size:11px;color:#bdbdbd;letter-spacing:-0.258px;left:377.90px;">Normal(T2)</div>
<svg style="left:437.0px;top:671px" width="12" height="12"><circle cx="6" cy="6" r="4.6" fill="#1c1c1c" opacity="0.6"/><circle cx="6" cy="6" r="3.5" fill="#252525" stroke="#f28b8b" stroke-width="1.1"/></svg>
<div class="r" style="left:1088px;top:393px;width:192px;height:141px;background:#393939;border-radius:5px"></div>
<div class="r" style="left:1088px;top:429px;width:192px;height:1px;background:#262626"></div>
<div class="t" style="top:410.80px;font-size:11.5px;color:#c3c3c3;letter-spacing:0.073px;left:1096.30px;">Lit Sprite Master</div>
<div class="r" style="left:1088px;top:445px;width:8px;height:2px;background:#5a5a40"></div>
<svg style="left:1094px;top:440px" width="12" height="12"><circle cx="6" cy="6" r="4.6" fill="#1c1c1c" opacity="0.6"/><circle cx="6" cy="6" r="3.5" fill="#252525" stroke="#f6ff9a" stroke-width="1.1"/></svg>
<div class="t" style="top:447.00px;font-size:11px;color:#b9b9b9;letter-spacing:-0.238px;left:1112.50px;">Position(3)</div>
<div class="r" style="left:1088px;top:469px;width:8px;height:2px;background:#5e4f5c"></div>
<svg style="left:1094px;top:464px" width="12" height="12"><circle cx="6" cy="6" r="4.6" fill="#1c1c1c" opacity="0.6"/><circle cx="6" cy="6" r="3.5" fill="#252525" stroke="#fbcbf4" stroke-width="1.1"/><circle cx="6" cy="6" r="2" fill="#fbcbf4"/></svg>
<div class="t" style="top:471.00px;font-size:11px;color:#b9b9b9;letter-spacing:-0.348px;left:1112.50px;">Color(4)</div>
<div class="r" style="left:1088px;top:493px;width:8px;height:2px;background:#5e4f5c"></div>
<svg style="left:1094px;top:488px" width="12" height="12"><circle cx="6" cy="6" r="4.6" fill="#1c1c1c" opacity="0.6"/><circle cx="6" cy="6" r="3.5" fill="#252525" stroke="#fbcbf4" stroke-width="1.1"/><circle cx="6" cy="6" r="2" fill="#fbcbf4"/></svg>
<div class="t" style="top:495.00px;font-size:11px;color:#b9b9b9;letter-spacing:-0.406px;left:1112.50px;">Mask(4)</div>
<div class="r" style="left:1088px;top:517px;width:8px;height:2px;background:#5a5a40"></div>
<svg style="left:1094px;top:512px" width="12" height="12"><circle cx="6" cy="6" r="4.6" fill="#1c1c1c" opacity="0.6"/><circle cx="6" cy="6" r="3.5" fill="#252525" stroke="#f6ff9a" stroke-width="1.1"/><circle cx="6" cy="6" r="2" fill="#f6ff9a"/></svg>
<div class="t" style="top:519.00px;font-size:11px;color:#b9b9b9;letter-spacing:-0.188px;left:1112.50px;">Normal(3)</div>
<div class="r" style="left:987px;top:437px;width:96px;height:19px;background:rgba(58,58,58,0.82)"></div>
<div class="t" style="top:446.50px;font-size:11px;color:#c6c6c6;letter-spacing:-0.250px;left:997.00px;">Object Space</div>
<div class="r" style="left:1069.0px;top:442.3px;width:8px;height:8px;border-radius:50%;background:#191919"></div>
<div class="r" style="left:1071.0px;top:444.3px;width:4px;height:4px;border-radius:50%;background:#f6ff9a"></div>
<div class="r" style="left:1077px;top:445.5px;width:18px;height:1.6px;background:#5a5a42"></div>
<div class="r" style="left:1083px;top:445px;width:4px;height:2.5px;background:#d8dc82"></div>
<div class="r" style="left:1290px;top:402px;width:400px;height:435px;background:#303030"></div>
<div class="r" style="left:1290px;top:402px;width:400px;height:36px;background:#434343"></div>
<svg style="left:1290px;top:402px" width="400" height="4"><path d="M0 0 L3 0 L0 3 Z M400 0 L397 0 L400 3 Z" fill="#202020"/></svg>
<div class="t" style="top:418.60px;font-size:11.5px;color:#bdbdbd;letter-spacing:0.079px;left:1300.70px;">Main Preview</div>
<div class="r" style="left:1323.5px;top:471px;width:333px;height:333px;border-radius:50%;background:#fff"></div>
<div class="r" style="left:1680px;top:832px;width:10px;height:1px;background:#151515"></div>
<div class="r" style="left:1680px;top:835px;width:10px;height:3px;background:#6a6a6a"></div>
<div class="r" style="left:0px;top:0px;width:1692px;height:1px;background:#0b72cf"></div>
<div class="r" style="left:1px;top:1px;width:1690px;height:1px;background:#f2f2f2"></div>
<div class="r" style="left:0px;top:0px;width:1px;height:840px;background:#1b88e6"></div>
<div class="r" style="left:1691px;top:0px;width:1px;height:840px;background:#1b88e6"></div>
<div class="r" style="left:0px;top:839px;width:1692px;height:1px;background:#1b88e6"></div>
</body></html>
